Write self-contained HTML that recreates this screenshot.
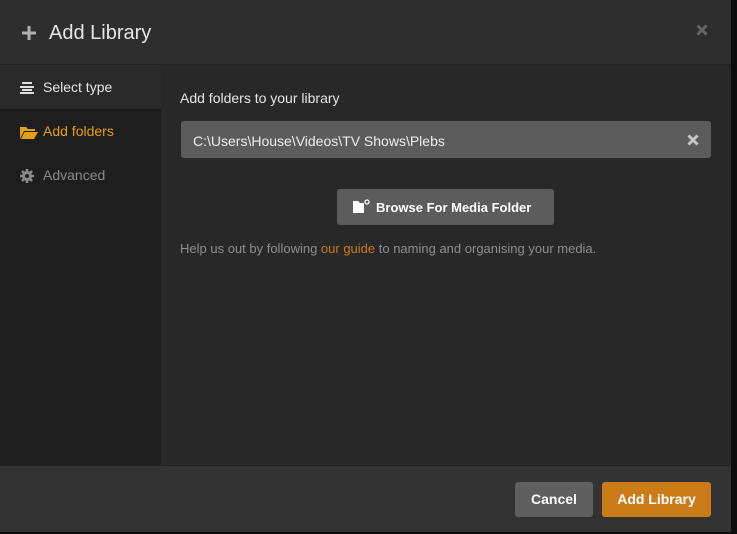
<!DOCTYPE html>
<html><head><style>
body{margin:0;width:737px;height:534px;background:#0c0c0c;font-family:"Liberation Sans",sans-serif;overflow:hidden;position:relative}
.dlg{position:absolute;left:0;top:0;width:731px;height:531px;background:#282828}
.hdr{position:absolute;left:0;top:0;width:731px;height:64px;background:#2e2e2e;border-bottom:1px solid #222}
.hdr .t{position:absolute;left:49px;top:22px;font-size:20px;color:#e6e6e6}
.side{position:absolute;left:0;top:65px;width:161px;height:400px;background:#1e1e1e}
.item{position:absolute;left:0;width:161px;height:44px;font-size:14px;line-height:44px}
.foot{position:absolute;left:0;top:465px;width:731px;height:66px;background:#333;border-top:1px solid #222}
.btn{position:absolute;height:35px;line-height:35px;text-align:center;font-weight:bold;font-size:14px;color:#fff;border-radius:3px}
</style></head><body>
<div class="dlg">
 <div class="hdr">
  <svg style="position:absolute;left:21px;top:25px" width="16" height="16"><path d="M8 1V15M1 8H15" stroke="#b0b0b0" stroke-width="3"/></svg>
  <div class="t">Add Library</div>
  <svg style="position:absolute;left:696px;top:24px" width="12" height="12"><path d="M1.5 1.5L10.5 10.5M10.5 1.5L1.5 10.5" stroke="#666" stroke-width="3"/></svg>
 </div>
 <div class="side">
  <div class="item" style="top:0;background:#2a2a2a;color:#e6e6e6">
   <svg style="position:absolute;left:20px;top:17px" width="14" height="12"><path d="M2 1H12M0 5H14M2 8H12M0 11H14" stroke="#e0e0e0" stroke-width="2"/></svg>
   <span style="position:absolute;left:43px;top:0">Select type</span></div>
  <div class="item" style="top:44px;color:#e5a00d">
   <svg style="position:absolute;left:20px;top:17px" width="18" height="13"><path d="M0 1H6L8 3H15V5H4L0 13Z M4.5 6H18L14 13H1Z" fill="#e5a00d"/></svg>
   <span style="position:absolute;left:43px;top:0">Add folders</span></div>
  <div class="item" style="top:88px;color:#8a8a8a">
   <svg style="position:absolute;left:20px;top:16px" width="14" height="14" viewBox="0 0 14 14"><circle cx="7" cy="7" r="5" fill="#8a8a8a"/><path d="M7 0V14M0 7H14M2 2L12 12M12 2L2 12" stroke="#8a8a8a" stroke-width="2.5"/><circle cx="7" cy="7" r="2" fill="#1e1e1e"/></svg>
   <span style="position:absolute;left:43px;top:0">Advanced</span></div>
 </div>
 <div style="position:absolute;left:180px;top:90px;font-size:14px;color:#e6e6e6">Add folders to your library</div>
 <div style="position:absolute;left:181px;top:121px;width:530px;height:37px;background:#5c5c5c;border-radius:3px">
  <div style="position:absolute;left:12px;top:12px;font-size:14px;color:#eee">C:\Users\House\Videos\TV Shows\Plebs</div>
  <svg style="position:absolute;left:506px;top:13px" width="12" height="12"><path d="M1.5 1.5L10.5 10.5M10.5 1.5L1.5 10.5" stroke="#c8c8c8" stroke-width="3"/></svg>
 </div>
 <div class="btn" style="left:337px;top:189px;width:217px;height:36px;line-height:36px;background:#5c5c5c;font-size:13px">
  <svg style="position:absolute;left:16px;top:10px" width="17" height="15"><path d="M0 2H5L7 4H11V14H0Z" fill="#fff"/><circle cx="14" cy="3" r="2" fill="none" stroke="#fff" stroke-width="1.3"/></svg>
  <span style="position:absolute;left:39px;top:1px">Browse For Media Folder</span></div>
 <div style="position:absolute;left:180px;top:241px;font-size:13px;color:#8e8e8e">Help us out by following <span style="color:#cc7b19">our guide</span> to naming and organising your media.</div>
 <div class="foot">
  <div class="btn" style="left:515px;top:16px;width:78px;background:#5f5f5f">Cancel</div>
  <div class="btn" style="left:602px;top:16px;width:109px;background:#cc7b19">Add Library</div>
 </div>
</div>
</body></html>
